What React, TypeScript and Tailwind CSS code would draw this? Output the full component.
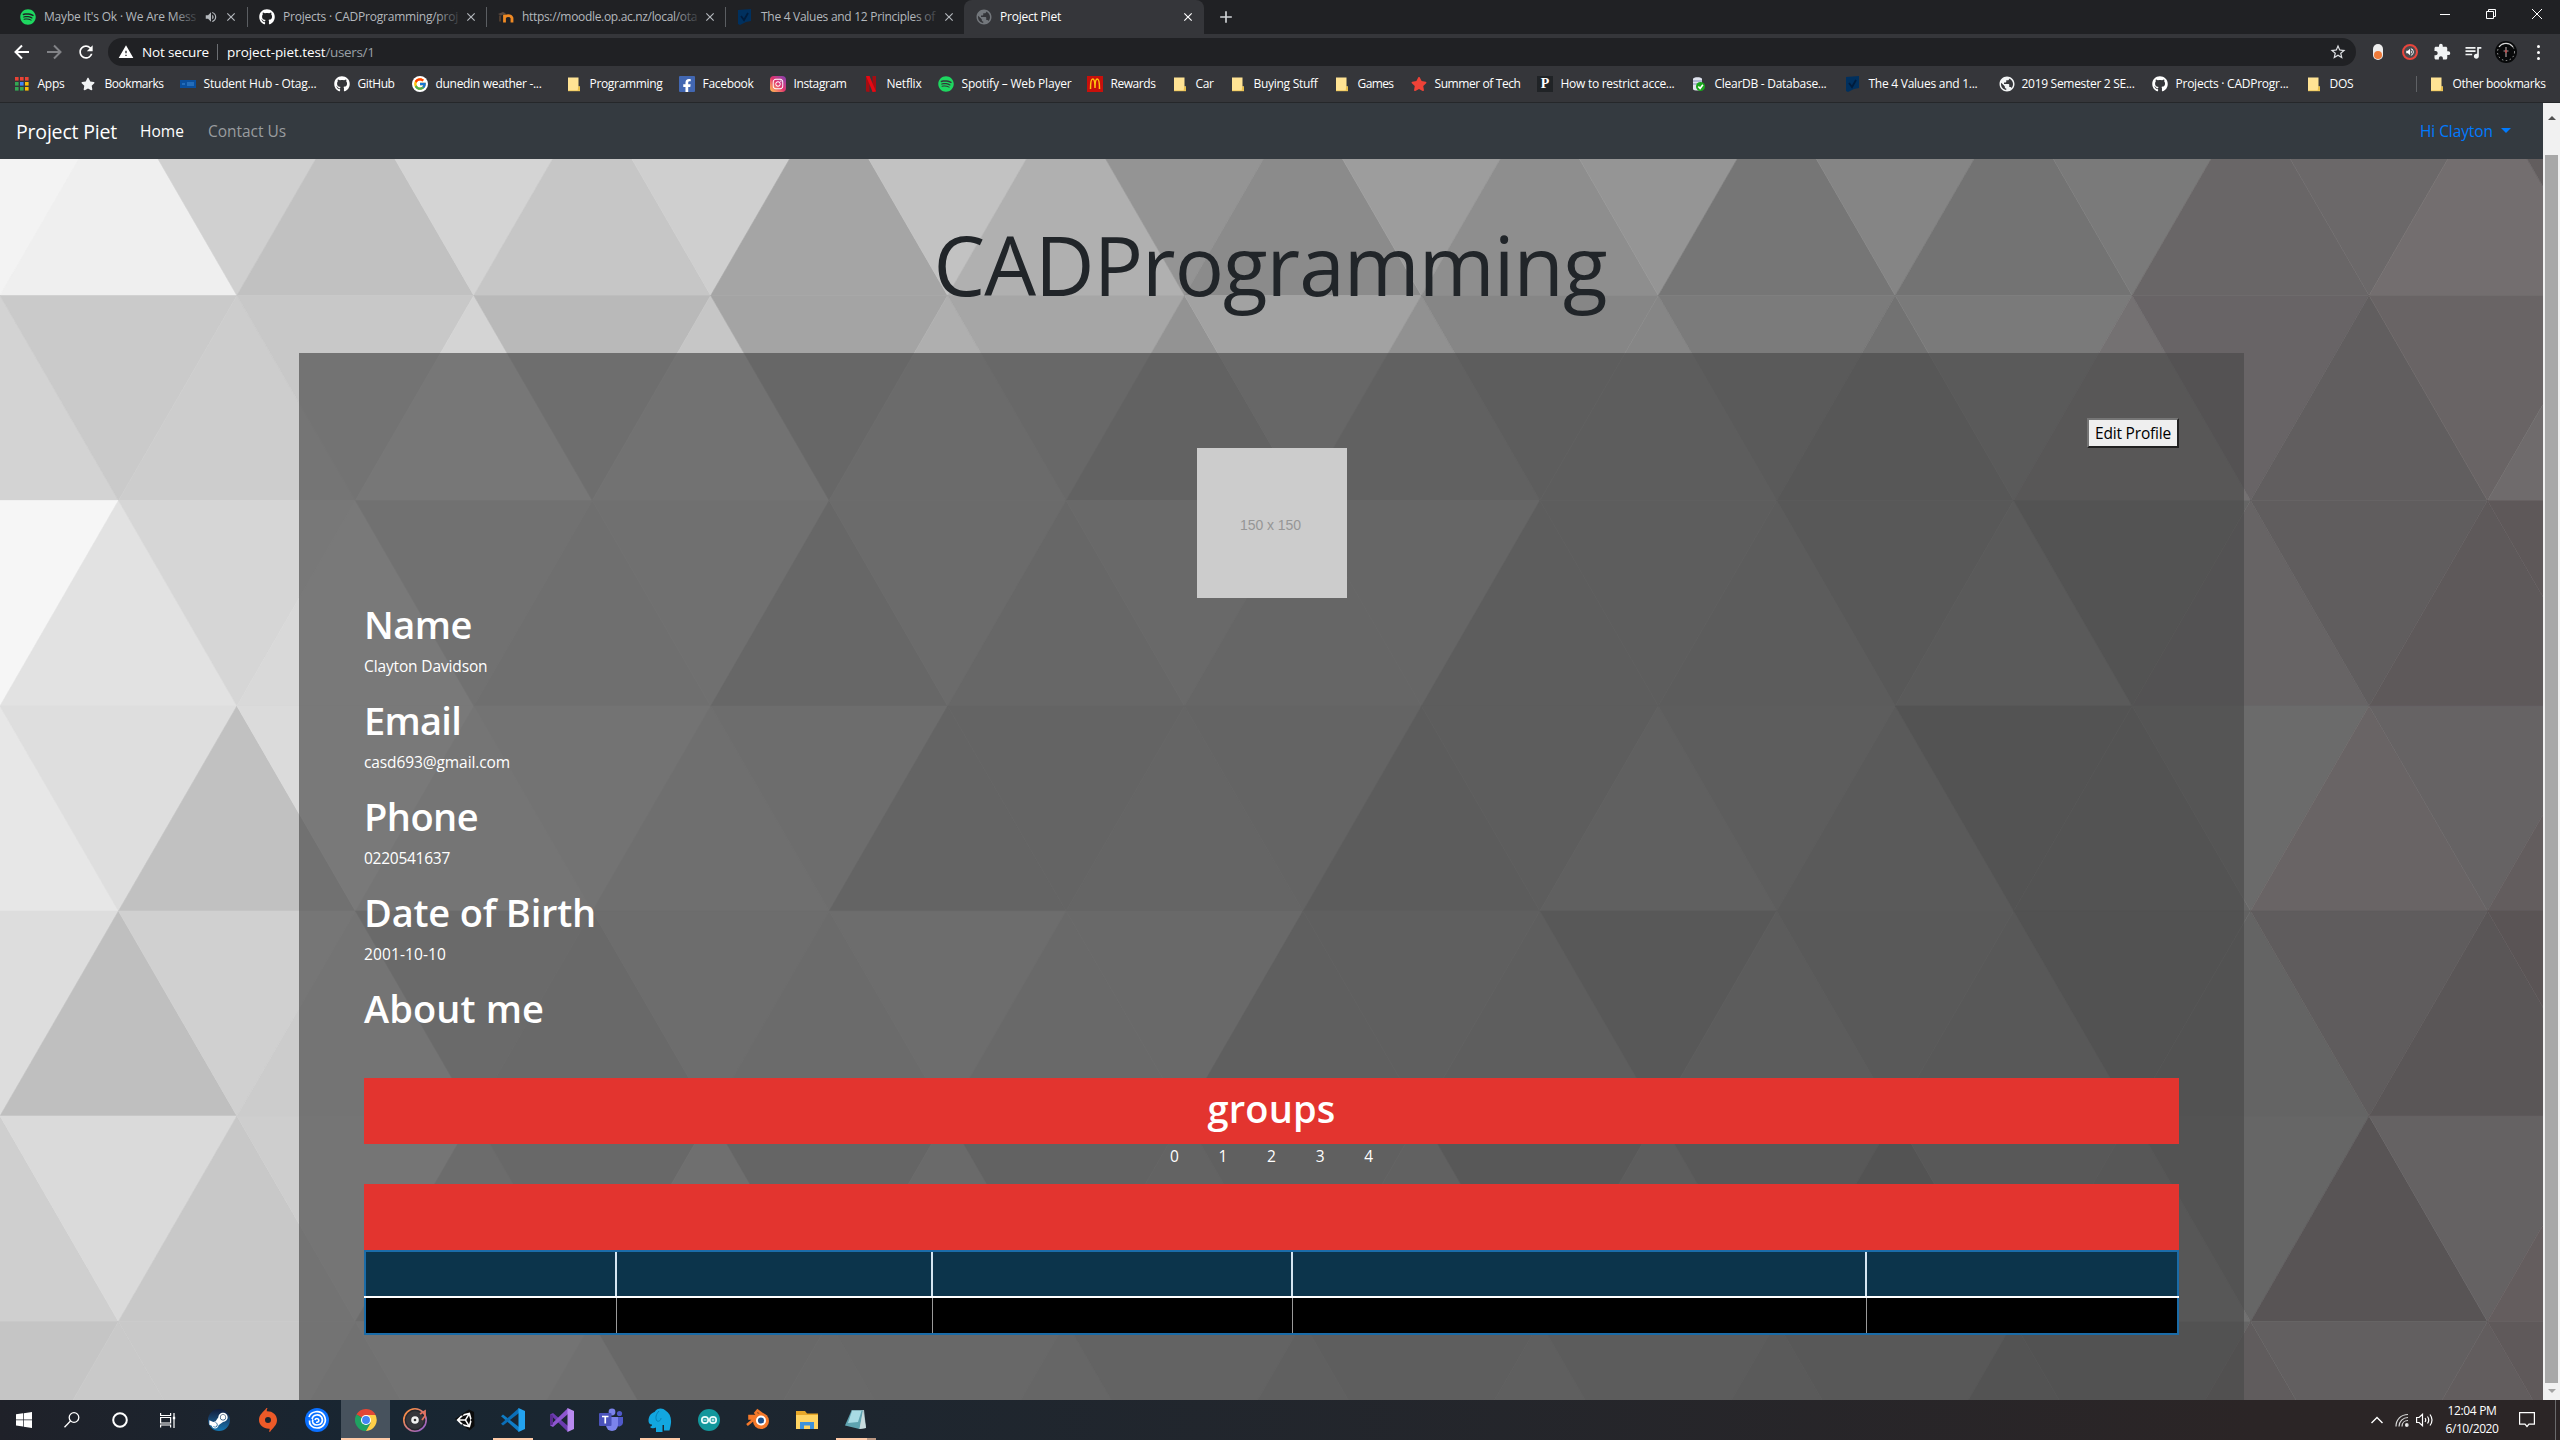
import { useLayoutEffect, useRef, useState, type ReactNode } from "react";
import { FaSpotify, FaGithub, FaFacebookF, FaInstagram, FaStar, FaUnity, FaSteamSymbol } from "react-icons/fa";
import { FcGoogle } from "react-icons/fc";
import { MdExtension, MdOutlineQueueMusic, MdOutlineStarBorder, MdPublic, MdRefresh, MdWarning, MdVolumeUp, MdClose, MdAdd } from "react-icons/md";

/* Text whose tracking is adjusted so that it fills a given width. */
function Fit({ w, className = "", children }: { w: number; className?: string; children: string }) {
  const ref = useRef<HTMLSpanElement>(null);
  const [tracking, setTracking] = useState(0);
  useLayoutEffect(() => {
    if (!ref.current) return;
    const natural = ref.current.getBoundingClientRect().width;
    setTracking((w - natural) / children.length);
  }, [w, children]);
  return (
    <span ref={ref} className={`inline-block whitespace-pre ${className}`} style={{ letterSpacing: `${tracking}px` }}>
      {children}
    </span>
  );
}

/* ---------- triangle backdrop ---------- */
type Shade = number | string;
const ROWS: { top: number; bottom: number; oddUp: boolean; shades: Shade[] }[] = [
  { top: 90.4, bottom: 295.5, oddUp: true, shades: [243, 239, 208, 193, 212, 198, 207, 165, 194, 176, 148, 139, 157, 142, 149, 118, 133, 115, 122, "#696667", "#6b6869", "#736e6f", "#625d5e"] },
  { top: 295.5, bottom: 500.5, oddUp: false, shades: [211, 202, 205, 200, 212, 185, 198, 164, 175, 166, 147, 162, 145, 134, 134, 123, 114, 122, "#747172", "#686466", "#615e5f", "#696465", "#6f6b6c"] },
  { top: 500.5, bottom: 706, oddUp: true, shades: [246, 226, 214, 217, 194, 188, 191, 162, 175, 162, 169, 159, 160, 132, 133, 131, 117, 123, 101, "#676465", "#605d5e", "#5e595a", "#5e5859"] },
  { top: 706, bottom: 911, oddUp: false, shades: [231, 222, 193, 219, 206, 200, 186, 182, 153, 155, 156, 154, 131, 133, 141, 133, 124, 102, 102, 107, "#696465", "#666364", "#635d5e"] },
  { top: 911, bottom: 1116, oddUp: true, shades: [221, 191, 208, 204, 173, 168, 180, 175, 180, 169, 170, 138, 140, 137, 118, 130, 121, 118, 98, 100, "#5f5c5d", "#5a5657", "#5a5455"] },
  { top: 1116, bottom: 1321.5, oddUp: false, shades: [207, 218, 200, 206, 178, 166, 188, 156, 172, 147, 151, 142, 146, 118, 132, 116, 102, 117, 113, 102, "#585455", "#656263", "#645d5e"] },
  { top: 1321.5, bottom: 1526.5, oddUp: true, shades: [197, 201, 201, 195, 200, 190, 165, 170, 165, 160, 150, 142, 136, 138, 130, 123, 118, 102, 100, "#605c5d", "#625f60", "#625d5e", "#5f595a"] },
];
const HALF = 118.45;

function Backdrop() {
  return (
    <svg className="absolute inset-0 h-full w-full" viewBox="0 159 2543 1241" preserveAspectRatio="none">
      {ROWS.map((row, r) =>
        row.shades.map((s, k) => {
          const up = (k % 2 === 1) === row.oddUp;
          const base = up ? row.bottom : row.top;
          const tip = up ? row.top : row.bottom;
          const fill = typeof s === "number" ? `rgb(${s},${s},${s})` : s;
          return (
            <polygon
              key={`${r}-${k}`}
              points={`${(k - 1) * HALF},${base} ${(k + 1) * HALF},${base} ${k * HALF},${tip}`}
              fill={fill}
              stroke={fill}
              strokeWidth="0.6"
            />
          );
        }),
      )}
    </svg>
  );
}

/* ---------- browser chrome ---------- */
const Spotify = () => <FaSpotify className="h-4 w-4 text-[#1ed760]" />;
const Github = () => <FaGithub className="h-4 w-4 text-white" />;
const Moodle = () => (
  <svg viewBox="0 0 16 16" className="h-4 w-4">
    <path d="M6.500 13.500V5.500M6.500 9a4 3.600 0 0 1 7.500 0v4.500" fill="none" stroke="#f08a24" strokeWidth="2.800" />
    <path d="M0 5 5 3l3 1.500L3 6.500z" fill="#5a4a40" />
    <path d="M2 6.500v6" stroke="#5e4430" strokeWidth="1.500" />
  </svg>
);
const Scrum = () => (
  <svg viewBox="0 0 16 16" className="h-4 w-4">
    <path d="M1 1 14 0v12l-5 1-6 3-2-1z" fill="#00305e" />
    <path d="m4 7 3 4 4-7" fill="none" stroke="#001c3c" strokeWidth="1.8" />
  </svg>
);
const Folder = () => (
  <svg viewBox="0 0 16 16" className="h-4 w-4">
    <path d="M2 1.5h10.5v9H14V15H2z" fill="#ffe394" />
    <path d="M12.2 10.5H14V15h-2.4z" fill="#e8bf4c" />
    <path d="M2 14.3h12v.9H2z" fill="#efc75a" />
  </svg>
);
const Apps = () => (
  <svg viewBox="0 0 16 16" className="h-4 w-4">
    {["#ea4335", "#ea4335", "#ea4335", "#34a853", "#4285f4", "#fbbc05", "#34a853", "#34a853", "#fbbc05"].map((c, i) => (
      <rect key={i} x={1 + (i % 3) * 5} y={1 + Math.floor(i / 3) * 5} width="3.6" height="3.6" fill={c} />
    ))}
  </svg>
);
const Hub = () => (
  <svg viewBox="0 0 16 16" className="h-4 w-4">
    <rect y="4" width="16" height="8" fill="#0a4f9e" />
    <path d="M2 8h3M7 7h7M7 9h7" stroke="#3f8bd6" strokeWidth="1.2" />
  </svg>
);
const Facebook = () => (
  <span className="flex h-4 w-4 items-end justify-end overflow-hidden rounded-[1px] bg-[#4267b2]">
    <FaFacebookF className="-mb-px mr-0.5 h-3.5 w-3 text-white" />
  </span>
);
const Insta = () => (
  <span className="flex h-4 w-4 items-center justify-center rounded bg-linear-to-tr from-[#fdc04a] via-[#e1306c] to-[#833ab4]">
    <FaInstagram className="h-3 w-3 text-white" />
  </span>
);
const Netflix = () => (
  <svg viewBox="0 0 16 16" className="h-4 w-4">
    <path d="M3 0h3.5v16L3 15.6zM9.5 0H13v15.6L9.500 16z" fill="#a50d12" />
    <path d="M3 0h3.5L13 15.600 9.600 16z" fill="#e50914" />
  </svg>
);
const Rewards = () => (
  <svg viewBox="0 0 16 16" className="h-4 w-4">
    <rect width="16" height="16" fill="#c8100b" />
    <path d="M3.500 13C3.500 7 4.200 3 5.700 3S8 7 8 12c0-5 .8-9 2.300-9s2.200 4 2.200 10" fill="none" stroke="#ffc20e" strokeWidth="1.500" />
  </svg>
);
const RedStar = () => <FaStar className="h-4 w-4 text-[#ee4237]" />;
const WhiteStar = () => <FaStar className="h-3.5 w-3.5 text-[#f1f3f4]" />;
const PBox = () => <span className="flex h-4 w-4 items-center justify-center bg-[#202326] font-['Liberation_Serif',serif] text-[14px] font-bold text-white">P</span>;
const ClearDb = () => (
  <svg viewBox="0 0 16 16" className="h-4 w-4">
    <path d="M2 3c0-2.500 9-2.500 9 0v10c0 2-9 2-9 0z" fill="#dfe3ee" />
    <path d="M2 5h9M2 8h9" stroke="#8288b8" />
    <circle cx="9.500" cy="10.500" r="4.500" fill="#18a51b" />
    <path d="m7.300 10.500 1.800 1.900 2.800-3.700" fill="none" stroke="#fff" strokeWidth="1.600" />
  </svg>
);
const Globe = () => <MdPublic className="h-[18px] w-[18px] text-[#f1f3f4]" />;

type Tab = { icon: ReactNode; title: string; tw: number; sound?: boolean };
const TABS: Tab[] = [
  { icon: <Spotify />, title: "Maybe It's Ok · We Are Mess", tw: 152, sound: true },
  { icon: <Github />, title: "Projects · CADProgramming/proj", tw: 175 },
  { icon: <Moodle />, title: "https://moodle.op.ac.nz/local/ota", tw: 175 },
  { icon: <Scrum />, title: "The 4 Values and 12 Principles of", tw: 174 },
];

function TabStrip() {
  return (
    <div className="flex h-[34px] items-stretch bg-[#202124] pl-[9px] text-[12px] text-[#b4b8bd]">
      {TABS.map((t, i) => (
        <div key={i} className="flex w-[239px] shrink-0 items-center pl-[11px]">
          {t.icon}
          <div className={`relative ml-2 ${t.sound ? "w-[153px]" : "w-[176px]"}`}>
            <Fit w={t.tw}>{t.title}</Fit>
            <span className="absolute inset-y-0 right-0 w-6 bg-linear-to-r from-transparent to-[#202124]/85" />
          </div>
          {t.sound && <MdVolumeUp className="ml-[7px] h-3.5 w-3.5" />}
          <MdClose className={`h-3.5 w-3.5 ${t.sound ? "ml-[6px]" : "ml-[5px]"}`} />
          <span className={`ml-auto h-5 w-px ${i < 3 ? "bg-[#5b5e62]" : "bg-transparent"}`} />
        </div>
      ))}
      <div className="-ml-px flex w-[240px] shrink-0 items-center rounded-t-lg bg-[#35363a] pl-[11px] text-white">
        <MdPublic className="h-[18px] w-[18px] text-[#73777c]" />
        <span className="ml-[7px]"><Fit w={61}>Project Piet</Fit></span>
        <MdClose className="mr-[9px] ml-auto h-3.5 w-3.5" />
      </div>
      <MdAdd className="mt-[7px] ml-3 h-5 w-5 text-[#d0d3d6]" />
      <div className="ml-auto flex items-start gap-9 pt-[9px] pr-[18px]">
        <svg viewBox="0 0 10 10" className="h-2.5 w-2.5"><path d="M0 5.500h10" stroke="#fff" /></svg>
        <svg viewBox="0 0 10 10" className="h-2.5 w-2.5" fill="none" stroke="#fff"><path d="M.5 2.500h7v7h-7zM2.500 2.500v-2h7v7h-2" /></svg>
        <svg viewBox="0 0 10 10" className="h-2.5 w-2.5"><path d="m0 0 10 10M10 0 0 10" stroke="#fff" /></svg>
      </div>
    </div>
  );
}

function Arrow({ className, flip }: { className: string; flip?: boolean }) {
  return (
    <svg viewBox="0 0 16 16" className={`h-4 w-4 ${className}`} fill="none" stroke="currentColor" strokeWidth="2">
      <path d={flip ? "M1 8h13M8 1.500 14.500 8 8 14.500" : "M15 8H2M8 1.500 1.500 8 8 14.500"} />
    </svg>
  );
}

function Toolbar() {
  return (
    <div className="flex h-[36px] items-center bg-[#35363a] pl-3.5 text-white">
      <Arrow className="text-white" />
      <Arrow className="ml-4 text-[#828387]" flip />
      <MdRefresh className="ml-3.5 h-5 w-5" />
      <div className="ml-3 flex h-[28px] w-[2248px] items-center rounded-full bg-[#202124] pl-2.5 text-[13.5px]">
        <MdWarning className="h-4 w-4" />
        <span className="ml-2"><Fit w={67}>Not secure</Fit></span>
        <span className="mx-2 h-4 w-px bg-[#6b6e72]" />
        <span className="ml-px"><Fit w={98.5}>project-piet.test</Fit></span>
        <Fit w={49} className="text-[#9aa0a6]">/users/1</Fit>
        <MdOutlineStarBorder className="mr-[9px] ml-auto h-[18px] w-[18px] text-[#dfe1e5]" />
      </div>
      <span className="ml-[17px] flex h-4 w-2.5 items-end justify-center rounded-full bg-[#ededed] pb-px">
        <span className="h-2 w-2 rounded-full bg-[#ef7b3a]" />
      </span>
      <span className="ml-[19px] flex h-4 w-4 items-center justify-center rounded-full border-2 border-[#e8453c] bg-[#4a4b4f]">
        <MdVolumeUp className="h-2.5 w-2.5" />
      </span>
      <MdExtension className="ml-[15px] h-[18px] w-[18px] text-[#f1f3f4]" />
      <MdOutlineQueueMusic className="ml-3 h-5 w-5 text-[#f1f3f4]" />
      <svg viewBox="0 0 22 22" className="ml-3 h-[22px] w-[22px]">
        <circle cx="11" cy="11" r="11" fill="#08090a" />
        <circle cx="11" cy="11" r="8.500" fill="none" stroke="#a8a8a8" strokeDasharray="1.500 2.500" />
        <path d="M4 6a8.500 8.500 0 0 1 14 0" fill="none" stroke="#d8d8d8" strokeWidth="1.200" />
        <path d="M11 6v10M8.500 10h5" stroke="#a89c9c" strokeWidth="1.200" />
        <path d="M11 9v3" stroke="#d23a3a" strokeWidth="1.200" />
      </svg>
      <span className="ml-5 flex flex-col gap-[3px]">
        <i className="h-[3px] w-[3px] rounded-full bg-white" />
        <i className="h-[3px] w-[3px] rounded-full bg-white" />
        <i className="h-[3px] w-[3px] rounded-full bg-white" />
      </span>
    </div>
  );
}

const BOOKMARKS: { icon: ReactNode; label: string; tw: number; box: string }[] = [
  { icon: <Apps />, label: "Apps", tw: 27, box: "w-[67px]" },
  { icon: <WhiteStar />, label: "Bookmarks", tw: 59, box: "w-[99px]" },
  { icon: <Hub />, label: "Student Hub - Otag...", tw: 113, box: "w-[154px]" },
  { icon: <Github />, label: "GitHub", tw: 37, box: "w-[78px]" },
  { icon: <FcGoogle className="h-4 w-4 rounded-full bg-white p-px" />, label: "dunedin weather -...", tw: 106, box: "w-[154px]" },
  { icon: <Folder />, label: "Programming", tw: 73, box: "w-[113px]" },
  { icon: <Facebook />, label: "Facebook", tw: 51, box: "w-[91px]" },
  { icon: <Insta />, label: "Instagram", tw: 53, box: "w-[93px]" },
  { icon: <Netflix />, label: "Netflix", tw: 35, box: "w-[75px]" },
  { icon: <Spotify />, label: "Spotify – Web Player", tw: 110, box: "w-[149px]" },
  { icon: <Rewards />, label: "Rewards", tw: 45, box: "w-[85px]" },
  { icon: <Folder />, label: "Car", tw: 18, box: "w-[58px]" },
  { icon: <Folder />, label: "Buying Stuff", tw: 64, box: "w-[104px]" },
  { icon: <Folder />, label: "Games", tw: 36, box: "w-[77px]" },
  { icon: <RedStar />, label: "Summer of Tech", tw: 86, box: "w-[126px]" },
  { icon: <PBox />, label: "How to restrict acce...", tw: 114, box: "w-[154px]" },
  { icon: <ClearDb />, label: "ClearDB - Database...", tw: 112, box: "w-[154px]" },
  { icon: <Scrum />, label: "The 4 Values and 1...", tw: 109, box: "w-[153px]" },
  { icon: <Globe />, label: "2019 Semester 2 SE...", tw: 113, box: "w-[154px]" },
  { icon: <Github />, label: "Projects · CADProgr...", tw: 113, box: "w-[154px]" },
  { icon: <Folder />, label: "DOS", tw: 24, box: "w-[60px]" },
];

function Bookmark({ icon, label, tw, box }: { icon: ReactNode; label: string; tw: number; box: string }) {
  return (
    <span className={`flex shrink-0 items-center ${box}`}>
      <span className="flex w-[23.5px] shrink-0 items-center">{icon}</span>
      <Fit w={tw}>{label}</Fit>
    </span>
  );
}

function BookmarkBar() {
  return (
    <div className="flex h-[33px] items-center border-b border-[#25272a] bg-[#35363a] pb-[5px] pl-3.5 text-[12px] text-white">
      {BOOKMARKS.map((b) => (
        <Bookmark key={b.label} {...b} />
      ))}
      <span className="mr-3 ml-auto h-4 w-px bg-[#5f6165]" />
      <Bookmark icon={<Folder />} label="Other bookmarks" tw={93} box="w-[131px]" />
    </div>
  );
}

/* ---------- profile page ---------- */
function Navbar() {
  return (
    <nav className="flex h-14 items-center bg-[#343a40] pt-0.5 pl-4 text-[15.5px]">
      <Fit w={101} className="text-[19.5px] text-white">Project Piet</Fit>
      <Fit w={44} className="ml-[23px] text-white">Home</Fit>
      <Fit w={78} className="ml-6 text-[#999c9f]">Contact Us</Fit>
      <span className="mr-8 ml-auto flex items-center text-[#007bff]">
        <Fit w={73}>Hi Clayton</Fit>
        <span className="mb-1 ml-2 border-x-[5px] border-t-[5px] border-x-transparent border-t-[#007bff]" />
      </span>
    </nav>
  );
}

const FIELDS = [
  { title: "Name", tw: 108, value: "Clayton Davidson", vw: 123.5 },
  { title: "Email", tw: 97, value: "casd693@gmail.com", vw: 146 },
  { title: "Phone", tw: 114, value: "0220541637", vw: 86 },
  { title: "Date of Birth", tw: 232, value: "2001-10-10", vw: 82 },
  { title: "About me", tw: 180, value: "", vw: 0 },
];

function GroupTable() {
  const head = "h-[44px] border-r-2 border-[#d5e6f1]";
  const cell = "h-[35px] border-r border-[#9a9a9a]";
  return (
    <div className="h-[85px] border-2 border-[#1b6ca8]">
      <div className="-mx-0.5 -mt-0.5 grid grid-cols-[251px_316px_360px_574px_1fr] border-2 border-b-0 border-[#1b6ca8] bg-[#0c344b]">
        <div className={head} /><div className={head} /><div className={head} /><div className={head} /><div className="h-[44px]" />
      </div>
      <div className="-mx-0.5 h-0.5 bg-white" />
      <div className="grid grid-cols-[251px_316px_360px_574px_1fr] bg-black">
        <div className={cell} /><div className={cell} /><div className={cell} /><div className={cell} /><div className="h-[35px]" />
      </div>
    </div>
  );
}

function Profile() {
  return (
    <main className="relative h-[1241px] overflow-hidden">
      <Backdrop />
      <div className="relative flex h-full flex-col items-center">
        <h1 className="mt-[45px] h-[149px] pr-[3px] text-[82px] leading-[120px] text-[#212529]">
          <Fit w={673}>CADProgramming</Fit>
        </h1>
        <section className="flex w-[1945px] flex-1 flex-col bg-[rgba(74,74,74,0.675)] px-[65px] pt-[65px] text-white">
          <button className="h-[30px] w-[92px] self-end border-2 border-t-[#767676] border-r-[#212121] border-b-[#212121] border-l-[#767676] bg-[#efefef] text-[15.5px] leading-[27px] text-black">
            <Fit w={76}>Edit Profile</Fit>
          </button>
          <div className="flex h-[150px] w-[150px] items-center justify-center self-center bg-[#cccccc] pt-1 pr-0.5 font-['Liberation_Sans',sans-serif] text-[14px] text-[#969696]">
            <Fit w={61}>150 x 150</Fit>
          </div>
          <div className="mt-[6.5px] h-[473.5px]">
            {FIELDS.map((f) => (
              <div key={f.title} className="h-[96px]">
                <h2 className="h-[48.5px] text-[38px] leading-[38px] font-semibold"><Fit w={f.tw}>{f.title}</Fit></h2>
                <p className="text-[15.5px] leading-[26px]"><Fit w={f.vw}>{f.value}</Fit></p>
              </div>
            ))}
          </div>
          <div className="flex h-[66px] justify-center bg-[#e3342f] pt-[11px] text-[38px] leading-[38px] font-semibold">
            <Fit w={128}>groups</Fit>
          </div>
          <div className="flex h-[40px] justify-center text-[15.5px] leading-[25px]">
            {["0", "1", "2", "3", "4"].map((n) => (
              <span key={n} className="w-[48.6px] text-center">{n}</span>
            ))}
          </div>
          <div className="h-[66px] bg-[#e3342f]" />
          <GroupTable />
        </section>
      </div>
    </main>
  );
}

function Scrollbar() {
  return (
    <div className="flex w-[17px] flex-col items-center bg-[#f1f1f1]">
      <span className="mt-[13px] border-x-4 border-b-4 border-x-transparent border-b-[#505050]" />
      <span className="mt-[35px] h-[1228px] w-[13px] bg-[#a8a8a8]" />
      <span className="mt-[6px] border-x-4 border-t-4 border-x-transparent border-t-[#a3a3a3]" />
    </div>
  );
}

/* ---------- taskbar ---------- */
const big = "h-6 w-6";
const APPS: { icon: ReactNode; state?: "active" | "open" | "stacked" }[] = [
  { icon: (
    <span className="flex h-[22px] w-[22px] items-center justify-center overflow-hidden rounded-full bg-linear-to-b from-[#111d3b] to-[#1378b4]">
      <FaSteamSymbol className="h-[21px] w-[21px] text-white" />
    </span>) },
  { icon: (
    <svg viewBox="0 0 24 24" className={big}>
      <path fillRule="evenodd" d="M11.500 0c-.6 1-.8 2-.7 3.200C16.500 3 21 6.500 21 12c0 5.500-4.500 8-7 12-.8 0-1-.3-.8-.9.4-1 .5-1.600.4-2.400C8 21 3 17.500 3 12 3 6.500 7.500 4 10.500 0zM12 9a3 3 0 1 0 0 6 3 3 0 0 0 0-6z" fill="#ed5a28" />
    </svg>) },
  { icon: (
    <svg viewBox="0 0 24 24" className={big}>
      <circle cx="12" cy="12" r="12" fill="#0a70ff" />
      <g fill="none" stroke="#fff" strokeWidth="1.700">
        <path d="M4 9c2-6 11-7.500 15-1.500 3.500 6-.5 12.500-7 12.500-5 0-8-3.500-7.500-7.500" />
        <path d="M7 11c1-4.500 7-5.500 9.500-2 2.500 4.500-.5 8-4.500 8-3.500 0-5.500-3-4-5.500" />
        <path d="M10 12c.5-2 3.500-2 3.800.2.200 1.500-1.300 2.300-2.600 1.800" />
      </g>
    </svg>) },
  { state: "active", icon: (
    <svg viewBox="0 0 24 24" className="h-[22px] w-[22px]">
      <path d="M12 12 1.600 6A12 12 0 0 1 22.400 6z" fill="#e24736" />
      <path d="M12 12 1.600 6A12 12 0 0 0 12 24l5-9z" fill="#1fa261" />
      <path d="M12 12h0l5.200 3L12 24A12 12 0 0 0 22.400 6.500H12z" fill="#ffcf48" />
      <circle cx="12" cy="12" r="5.500" fill="#fff" />
      <circle cx="12" cy="12" r="4.300" fill="#4285f4" />
    </svg>) },
  { icon: (
    <svg viewBox="0 0 24 24" className={big}>
      <defs><linearGradient id="ring" x1="0" y1="0" x2="1" y2="1"><stop offset="0.200" stopColor="#f38a4b" /><stop offset="0.900" stopColor="#9a63c9" /></linearGradient></defs>
      <circle cx="12" cy="12" r="11.200" fill="#24262c" stroke="url(#ring)" strokeWidth="1.600" />
      <circle cx="12" cy="12" r="9" fill="#35363b" />
      <circle cx="12" cy="12" r="3.800" fill="#f2f2f2" />
      <circle cx="12" cy="12" r="1.300" fill="#333" />
      <path d="m17 6 5-3v5l-3 4" stroke="#e5735e" strokeWidth="1.800" fill="none" />
    </svg>) },
  { icon: (
    <svg viewBox="0 0 24 24" className={big}>
      <path d="M3 11 17 1.500l5 2.500.5 14-5 4.500z" fill="#0b0b0b" />
      <foreignObject x="4" y="3" width="18" height="18"><FaUnity className="h-[18px] w-[18px] text-white" /></foreignObject>
    </svg>) },
  { state: "open", icon: (
    <svg viewBox="0 0 24 24" className={big}>
      <path d="M0 8.200 2 6.500 18 19v5z" fill="#0f7dc6" />
      <path d="M0 15.800 2 17.500 18 5V0z" fill="#0b6fb8" />
      <path d="m17.500 0 6.500 3v18l-6.500 3z" fill="#23a3f0" />
    </svg>) },
  { icon: (
    <svg viewBox="0 0 24 24" className={big}>
      <path d="M0 6.500 3 5l15 13v6z" fill="#6c3bb0" />
      <path d="M0 17.500 3 19 18 6V0z" fill="#8e56cf" />
      <path d="M0 6.500 3 7.500v9l-3 1z" fill="#5c2d91" />
      <path d="m17.500 0 6.500 3v18l-6.500 3z" fill="#b98af0" />
    </svg>) },
  { icon: (
    <svg viewBox="0 0 24 24" className={big}>
      <circle cx="20.500" cy="5.500" r="2.600" fill="#5059c9" />
      <circle cx="13" cy="4" r="3.400" fill="#7b83eb" />
      <path d="M17 9h7v6a4 4 0 0 1-7 2z" fill="#5059c9" />
      <path d="M7 9h12v8a6 6 0 0 1-12 0z" fill="#7b83eb" />
      <rect y="5" width="12.500" height="13" rx="1" fill="#4b53bc" />
      <path d="M3 8.500h6.500M6.250 8.500v7" stroke="#fff" strokeWidth="1.700" />
    </svg>) },
  { state: "open", icon: (
    <svg viewBox="0 0 24 24" className={big}>
      <path d="M.5 13C.5 8 3 5 6.500 4 9-.5 15-.5 17.500 2.500 21.500 5 23.500 9 23 15c-.3 3-1 5-1.500 7.500H16V17h-1.500v7H8v-4.500c-2 1.300-5 1-6-.8 1.500-.2 2-.8 2-2.200-2 .3-3.500-1.500-3.500-3.500z" fill="#12a7e0" />
      <path d="M11 3c-3 3-4 7-2 10 2 1 4-1 4-3" fill="none" stroke="#0781b5" strokeWidth="1" />
    </svg>) },
  { icon: (
    <svg viewBox="0 0 24 24" className={big}>
      <circle cx="12" cy="12" r="11" fill="#12979c" />
      <g fill="none" stroke="#e8fbfb" strokeWidth="1.700"><circle cx="8" cy="12" r="3.200" /><circle cx="16" cy="12" r="3.200" /></g>
      <path d="M6.500 12h3M14.500 12h3M16 10.500v3" stroke="#e8fbfb" />
    </svg>) },
  { icon: (
    <svg viewBox="0 0 24 24" className={big}>
      <path d="M1 17 9 10.500H3.500V8h9L9.500 5l2-2.500L20 9" fill="none" stroke="#f5792a" strokeWidth="2.600" />
      <circle cx="15" cy="13" r="8" fill="#f5792a" />
      <circle cx="15" cy="12.500" r="5" fill="#fff" />
      <circle cx="15" cy="12.500" r="3.100" fill="#1b4f8c" />
    </svg>) },
  { icon: (
    <svg viewBox="0 0 24 24" className={big}>
      <path d="M1 3h9l2 2.500h11V21H1z" fill="#e8a829" />
      <path d="M1 7h22v14H1z" fill="#ffd463" />
      <path d="M5 21v-7h14v7h-4v-3.500H9V21z" fill="#3d92dc" />
    </svg>) },
  { state: "stacked", icon: (
    <svg viewBox="0 0 24 24" className={big}>
      <path d="M7.500 2h12.500l2 18-7 1z" fill="#a8bfc4" />
      <path d="M7.500 2.500h11.500L15.500 21 1 17.500z" fill="#5fa3b0" />
      <path d="M8 3h9.500L14 14 4 15z" fill="#a9dbe4" />
      <path d="M19 2.500 22 20l-6.500 1z" fill="#c9dcde" />
    </svg>) },
];

function Taskbar() {
  return (
    <footer className="flex h-10 items-stretch bg-linear-to-r from-[#1f2129] via-[#182632] via-15% to-[#2b2526] to-88% text-white">
      <div className="flex w-[194px] items-center">
        <svg viewBox="0 0 16 16" className="ml-4 h-4 w-4" fill="#fff"><path d="M0 2.300 7 1.300v6.200H0zM7.700 1.200 16 0v7.500H7.700zM0 8.300h7v6.300l-7-1zM7.700 8.300H16V16l-8.300-1.200z" /></svg>
        <svg viewBox="0 0 16 16" className="ml-8 h-4 w-4" fill="none" stroke="#fff" strokeWidth="1.300"><circle cx="10" cy="5.500" r="4.800" /><path d="M6.500 9 .5 15.300" /></svg>
        <svg viewBox="0 0 16 16" className="ml-8 h-4 w-4" fill="none" stroke="#fff" strokeWidth="2"><circle cx="8" cy="8" r="6.800" /></svg>
        <svg viewBox="0 0 16 16" className="ml-8 h-4 w-4" fill="none" stroke="#fff" strokeWidth="1.200"><path d="M.6 1v2.500h10V1M.6 15.500v-2.500h10v2.500M.6 5.500h10v5.500H.6zM14 1v15" /><path d="M12.800 6h2.400" strokeWidth="2.500" /></svg>
      </div>
      {APPS.map((a, i) => (
        <div key={i} className={`relative flex w-[49px] items-center justify-center ${a.state === "active" ? "bg-[#47525d]" : ""}`}>
          {a.icon}
          {a.state === "active" && <span className="absolute inset-x-0 bottom-0 h-0.5 bg-[#ffcba8]" />}
          {a.state === "open" && <span className="absolute inset-x-[4.5px] bottom-0 h-0.5 bg-[#ffcba8]" />}
          {a.state === "stacked" && <span className="absolute inset-x-[4.5px] bottom-0 h-0.5 border-r-[9px] border-[#b99681] bg-[#ffcba8]" />}
        </div>
      ))}
      <div className="ml-auto flex items-center">
        <svg viewBox="0 0 12 8" className="h-2 w-3" fill="none" stroke="#fff" strokeWidth="1.400"><path d="M.5 7 6 1.500 11.500 7" /></svg>
        <svg viewBox="0 0 14 14" className="ml-3 h-3.5 w-3.5" fill="none" stroke="#d8d8d8" strokeWidth="1.200"><path d="M1 13.500C1 6.500 6 1.500 13 1.500M4 13.500c0-5 4-9 9-9M7 13.500c0-3.500 2.500-6 6-6" /><circle cx="11.800" cy="12" r="1.300" fill="#fff" /></svg>
        <svg viewBox="0 0 17 14" className="ml-[7px] h-3.5 w-[17px]" fill="none" stroke="#fff" strokeWidth="1.200"><path d="M.6 4.500h2.500L6.500 1.300v11.400L3.100 9.500H.6zM9 5q1.500 2 0 4M11.500 3.500q2.500 3.500 0 7M14 1.500q4 5.500 0 11" /></svg>
        <div className="ml-[11px] flex w-[56px] flex-col items-center text-[12px] leading-[18px]">
          <Fit w={49}>12:04 PM</Fit>
          <Fit w={53}>6/10/2020</Fit>
        </div>
        <svg viewBox="0 0 16 16" className="ml-[19px] h-4 w-4" fill="none" stroke="#fff" strokeWidth="1.200"><path d="M.6.6h14.800v11.500H10L8 14.500l-2-2.400H.6z" /></svg>
        <span className="ml-5 h-10 w-px bg-[#6a6a6c]" />
        <span className="w-1" />
      </div>
    </footer>
  );
}

export default function App() {
  return (
    <div className="flex h-[1440px] w-[2560px] flex-col overflow-hidden font-['Open_Sans','Noto_Sans',sans-serif]">
      <TabStrip />
      <Toolbar />
      <BookmarkBar />
      <div className="flex">
        <div className="w-[2543px]">
          <Navbar />
          <Profile />
        </div>
        <Scrollbar />
      </div>
      <Taskbar />
    </div>
  );
}
